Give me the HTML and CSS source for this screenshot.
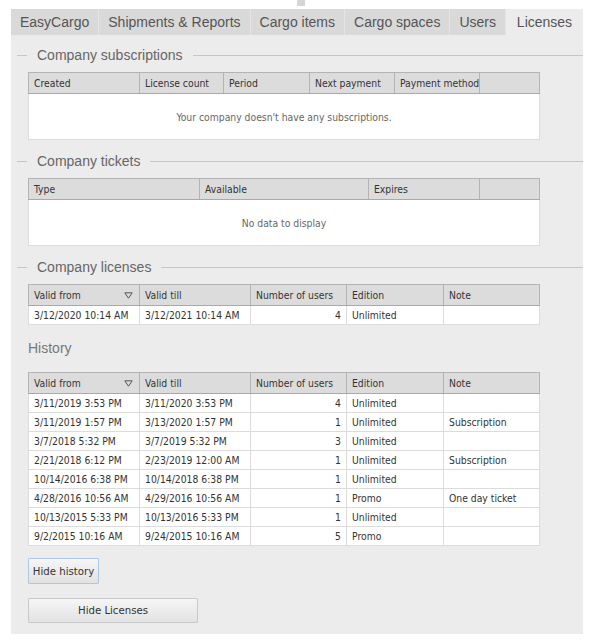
FILE: index.html
```html
<!DOCTYPE html>
<html>
<head>
<meta charset="utf-8">
<link rel="stylesheet" href="styles.css">
</head>
<body>
<div class="page">
  <div class="topstrip"><div class="mark"></div></div>
  <div class="tabs">
    <div class="tab">EasyCargo</div>
    <div class="tab">Shipments &amp; Reports</div>
    <div class="tab">Cargo items</div>
    <div class="tab">Cargo spaces</div>
    <div class="tab">Users</div>
    <div class="tab active">Licenses</div>
  </div>
  <div class="panel">
    <div class="legend first"><span class="lline short"></span><span class="ltext">Company subscriptions</span><span class="lline grow"></span></div>
    <table class="grid">
      <colgroup><col class="c111"><col class="c84"><col class="c86"><col class="c85"><col class="c85"><col class="c60"></colgroup>
      <thead><tr><th>Created</th><th>License count</th><th>Period</th><th>Next payment</th><th>Payment method</th><th></th></tr></thead>
      <tbody><tr><td class="empty" colspan="6">Your company doesn't have any subscriptions.</td></tr></tbody>
    </table>

    <div class="legend"><span class="lline short"></span><span class="ltext">Company tickets</span><span class="lline grow"></span></div>
    <table class="grid">
      <colgroup><col class="c171"><col class="c169"><col class="c111"><col class="c60"></colgroup>
      <thead><tr><th>Type</th><th>Available</th><th>Expires</th><th></th></tr></thead>
      <tbody><tr><td class="empty" colspan="4">No data to display</td></tr></tbody>
    </table>

    <div class="legend"><span class="lline short"></span><span class="ltext">Company licenses</span><span class="lline grow"></span></div>
    <table class="grid">
      <colgroup><col class="c111"><col class="c111"><col class="c96"><col class="c97"><col class="c96"></colgroup>
      <thead><tr><th><div class="sorth"><span>Valid from</span><svg class="sort" width="9" height="7" viewBox="0 0 9 7"><path d="M0.8 0.8 H8.2 L4.5 6.2 Z" fill="none" stroke="#555" stroke-width="1"/></svg></div></th><th>Valid till</th><th>Number of users</th><th>Edition</th><th>Note</th></tr></thead>
      <tbody>
        <tr><td>3/12/2020 10:14 AM</td><td>3/12/2021 10:14 AM</td><td class="num">4</td><td>Unlimited</td><td></td></tr>
      </tbody>
    </table>

    <div class="history">History</div>
    <table class="grid">
      <colgroup><col class="c111"><col class="c111"><col class="c96"><col class="c97"><col class="c96"></colgroup>
      <thead><tr><th><div class="sorth"><span>Valid from</span><svg class="sort" width="9" height="7" viewBox="0 0 9 7"><path d="M0.8 0.8 H8.2 L4.5 6.2 Z" fill="none" stroke="#555" stroke-width="1"/></svg></div></th><th>Valid till</th><th>Number of users</th><th>Edition</th><th>Note</th></tr></thead>
      <tbody>
        <tr><td>3/11/2019 3:53 PM</td><td>3/11/2020 3:53 PM</td><td class="num">4</td><td>Unlimited</td><td></td></tr>
        <tr><td>3/11/2019 1:57 PM</td><td>3/13/2020 1:57 PM</td><td class="num">1</td><td>Unlimited</td><td>Subscription</td></tr>
        <tr><td>3/7/2018 5:32 PM</td><td>3/7/2019 5:32 PM</td><td class="num">3</td><td>Unlimited</td><td></td></tr>
        <tr><td>2/21/2018 6:12 PM</td><td>2/23/2019 12:00 AM</td><td class="num">1</td><td>Unlimited</td><td>Subscription</td></tr>
        <tr><td>10/14/2016 6:38 PM</td><td>10/14/2018 6:38 PM</td><td class="num">1</td><td>Unlimited</td><td></td></tr>
        <tr><td>4/28/2016 10:56 AM</td><td>4/29/2016 10:56 AM</td><td class="num">1</td><td>Promo</td><td>One day ticket</td></tr>
        <tr><td>10/13/2015 5:33 PM</td><td>10/13/2016 5:33 PM</td><td class="num">1</td><td>Unlimited</td><td></td></tr>
        <tr><td>9/2/2015 10:16 AM</td><td>9/24/2015 10:16 AM</td><td class="num">5</td><td>Promo</td><td></td></tr>
      </tbody>
    </table>

    <button class="btn focus">Hide history</button>
    <button class="btn wide">Hide Licenses</button>
  </div>
</div>
</body>
</html>
```
FILE: styles.css
```css
html, body {
  margin: 0;
  padding: 0;
  background: #ffffff;
}
.page {
  padding-left: 11px;
  width: 572px;
}
.topstrip {
  height: 9px;
}
.mark {
  margin-left: 286px;
  width: 8px;
  height: 6px;
  background: #d6d6d6;
}
.tabs {
  display: flex;
  height: 26px;
}
.tab {
  font-family: "Liberation Sans", Arial, sans-serif;
  font-size: 14px;
  color: #555;
  background: #d9d9d9;
  line-height: 26px;
  padding: 0 9px;
  border-right: 1px solid #e4e4e4;
  white-space: nowrap;
}
.tab.active {
  background: #ececec;
  border-right: none;
  flex: 1;
  text-align: center;
  padding: 0;
}
.panel {
  background: #ececec;
  padding: 12px 0 11px 17px;
  display: flex;
  flex-direction: column;
  align-items: flex-start;
}
.legend {
  display: flex;
  align-items: center;
  height: 16px;
  margin-left: -11px;
  align-self: stretch;
  margin-top: 13px;
}
.legend.first {
  margin-top: 0;
}
.lline {
  height: 1px;
  background: #c6c6c6;
}
.lline.short {
  width: 10px;
}
.lline.grow {
  flex: 1;
}
.ltext {
  font-family: "Liberation Sans", Arial, sans-serif;
  font-size: 14px;
  color: #666;
  padding: 0 10px;
  line-height: 16px;
  white-space: nowrap;
}
.grid {
  margin-top: 9px;
  border-collapse: collapse;
  table-layout: fixed;
  width: 510px;
  border: 1px solid #a9a9a9;
  font-family: "DejaVu Sans Condensed", "DejaVu Sans", sans-serif;
  font-size: 10.3px;
  color: #333;
  background: #fff;
}
.c111 { width: 111px; }
.c84 { width: 84px; }
.c86 { width: 86px; }
.c85 { width: 85px; }
.c60 { width: 60px; }
.c171 { width: 171px; }
.c169 { width: 169px; }
.c96 { width: 96px; }
.c97 { width: 97px; }
.grid th {
  background: #dcdcdc;
  font-weight: normal;
  text-align: left;
  height: 20px;
  padding: 0 5px;
  border: 1px solid #b4b4b4;
  border-bottom-color: #a9a9a9;
  white-space: nowrap;
  overflow: hidden;
}
.sorth {
  display: flex;
  align-items: center;
  justify-content: space-between;
}
.sort {
  display: block;
  margin-right: 1px;
}
.grid td {
  height: 18px;
  padding: 0 5px;
  border: 1px solid #dcdcdc;
  white-space: nowrap;
  overflow: hidden;
}
.grid td.num {
  text-align: right;
}
.grid td.empty {
  height: 45px;
  text-align: center;
  color: #666;
}
.history {
  font-family: "Liberation Sans", Arial, sans-serif;
  font-size: 14px;
  color: #777;
  line-height: 16px;
  margin-top: 15px;
  margin-bottom: 7px;
}
.btn {
  font-family: "DejaVu Sans Condensed", "DejaVu Sans", sans-serif;
  font-size: 11.3px;
  color: #333;
  background: linear-gradient(#f6f6f6, #e2e2e2);
  border: 1px solid #c9c9c9;
  height: 26px;
  padding: 0;
  margin-top: 14px;
  border-radius: 1px;
  white-space: nowrap;
}
.btn.focus {
  border-color: #a9c8e6;
  width: 71px;
  margin-top: 12px;
}
.btn.wide {
  width: 170px;
  height: 25px;
}
```
